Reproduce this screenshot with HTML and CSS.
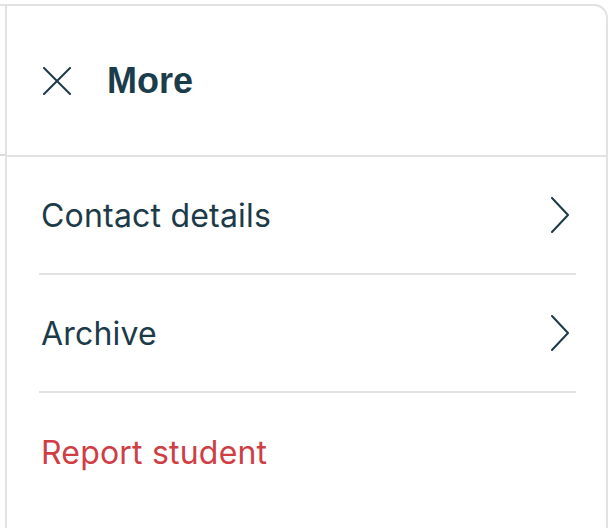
FILE: index.html
```html
<!DOCTYPE html>
<html lang="en">
<head>
    <meta charset="UTF-8">
    <meta name="viewport" content="width=device-width, initial-scale=1.0">
    <title>More</title>
    <link rel="stylesheet" href="styles.css">
</head>
<body>
    <div class="page">
        <div class="backdrop">
            <div class="backdrop-head"></div>
        </div>
        <div class="panel">
            <div class="panel-header">
                <button class="close" aria-label="Close">
                    <svg width="28" height="28" viewBox="0 0 28 28" fill="none" stroke="currentColor" stroke-width="2" stroke-linecap="round">
                        <path d="M1 1L27 27M27 1L1 27"/>
                    </svg>
                </button>
                <h2>More</h2>
            </div>
            <ul class="menu">
                <li class="menu-item">
                    <span>Contact details</span>
                    <svg class="chevron" width="20" height="36" viewBox="0 0 20 36" fill="none" stroke="currentColor" stroke-width="2" stroke-linecap="round" stroke-linejoin="round">
                        <path d="M2 1L18 18L2 35"/>
                    </svg>
                </li>
                <li class="menu-item">
                    <span>Archive</span>
                    <svg class="chevron" width="20" height="36" viewBox="0 0 20 36" fill="none" stroke="currentColor" stroke-width="2" stroke-linecap="round" stroke-linejoin="round">
                        <path d="M2 1L18 18L2 35"/>
                    </svg>
                </li>
                <li class="menu-item danger">
                    <span>Report student</span>
                </li>
            </ul>
        </div>
    </div>
</body>
</html>
```

FILE: styles.css
```css
* {
    box-sizing: border-box;
}
body {
    margin: 0;
    background-color: white;
    font-family: Inter, "Noto Sans", sans-serif;
    color: #1c3a48;
}
.page {
    display: flex;
    padding-top: 4px;
    height: 528px;
}
.backdrop {
    width: 5px;
    border-top: 2px solid #e2e2e2;
}
.backdrop-head {
    height: 150px;
    border-bottom: 2px solid #dcdcdc;
}
.panel {
    width: 603px;
    border: 2px solid #e2e2e2;
    border-bottom: none;
    border-top-right-radius: 14px;
}
.panel-header {
    display: flex;
    align-items: center;
    height: 151px;
    padding-left: 36px;
    border-bottom: 2px solid #e2e2e2;
}
.close {
    display: flex;
    padding: 0;
    background: none;
    border: none;
    color: #1c3a48;
    margin-right: 36px;
}
h2 {
    margin: 0;
    font-family: "Liberation Sans", Arial, sans-serif;
    font-weight: bold;
    font-size: 36px;
    color: #1b3d4b;
}
.menu {
    list-style: none;
    margin: 0;
    padding: 0 30px 0 32px;
}
.menu-item {
    display: flex;
    align-items: center;
    justify-content: space-between;
    height: 118px;
    padding: 0 6px 0 2px;
    font-size: 32px;
    letter-spacing: 0.2px;
    border-bottom: 2px solid #e2e2e2;
}
.menu-item:last-child {
    border-bottom: none;
}
.chevron {
    color: #1c3a48;
}
.danger {
    color: #cf3e45;
}
```
